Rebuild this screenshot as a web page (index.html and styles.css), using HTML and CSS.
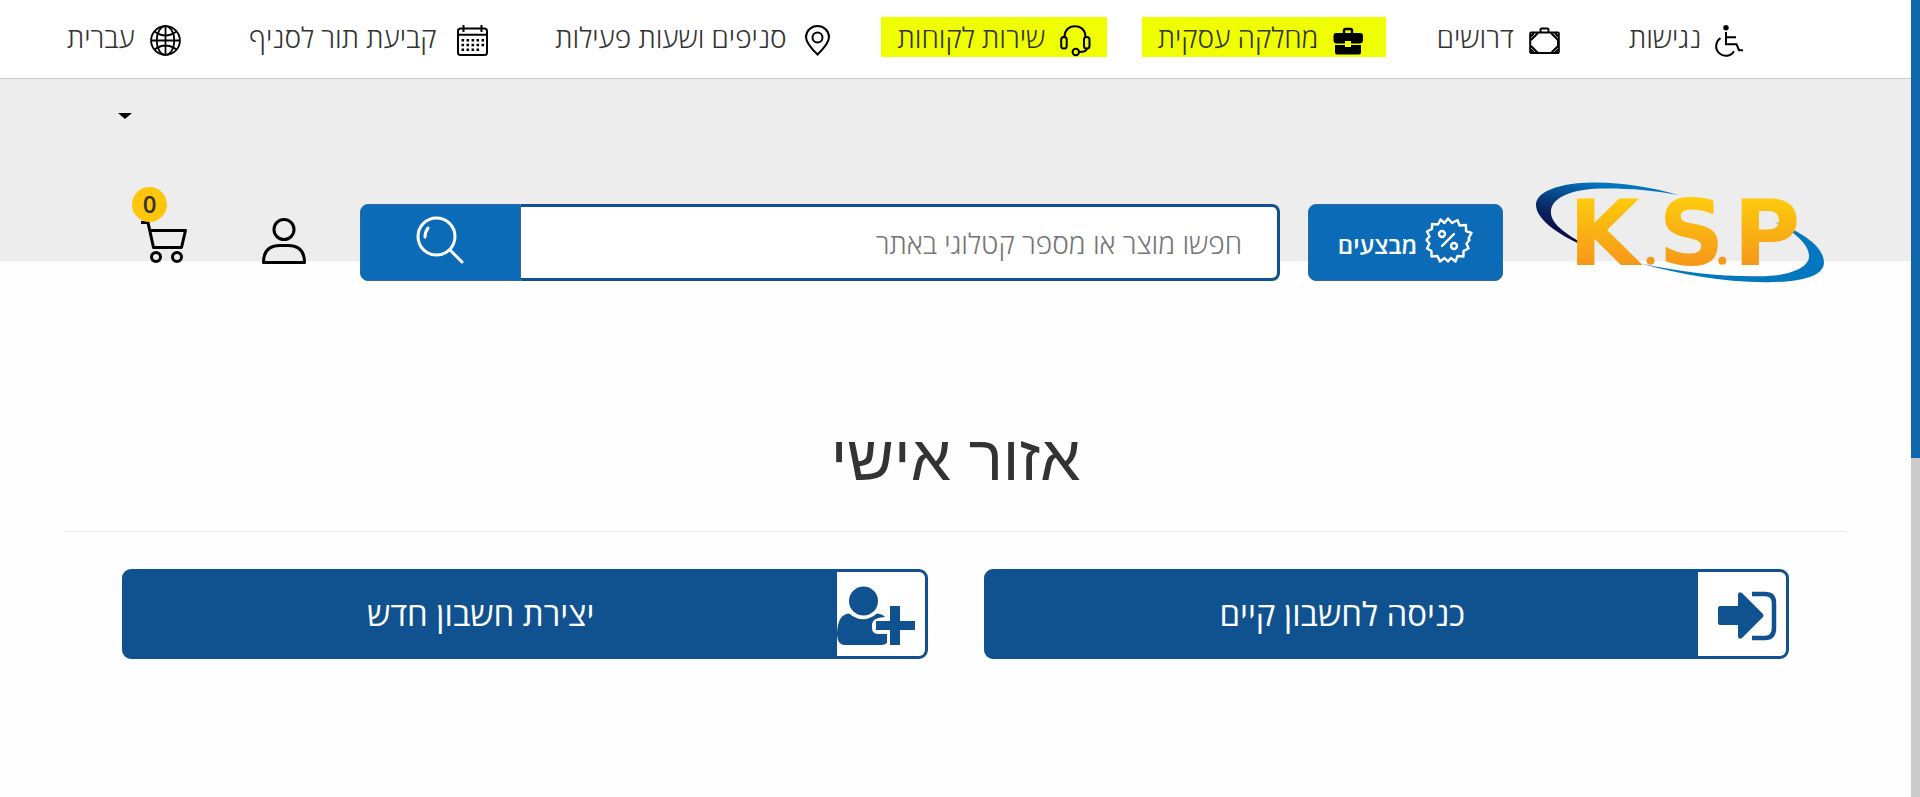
FILE: index.html
```html
<!DOCTYPE html>
<html lang="he" dir="rtl">
<head>
<meta charset="utf-8">
<title>אזור אישי - KSP</title>
<link rel="stylesheet" href="styles.css">
</head>
<body>
<div class="page">
  <nav class="topbar">
    <a class="toplink" href="#">
      <svg class="icon narrow" viewBox="2 0 27 31" fill="none" stroke="#000" stroke-width="2"><circle cx="12" cy="2.7" r="2.7" fill="#000" stroke="none"/><path d="M12 7v12.200h10.500l2.500 6h4M12 12.200h10M6.500 13.200a9.600 9.600 0 1 0 13.500 13"/></svg>
      <span>נגישות</span>
    </a>
    <a class="toplink" href="#">
      <svg class="icon" viewBox="0 0 31 31" fill="none" stroke="#000" stroke-width="2"><rect x="1.200" y="7.500" width="28.600" height="20.500" rx="1"/><path d="M11.500 7V4.500q0-1 1-1h6q1 0 1 1V7M2 15l7-7M22 8l7 7v6l-7 7M9 28l-7-7M2 11.500l3-3.500M29 11.500L26 8M2 24.500L5 28M29 24.500L26 28"/></svg>
      <span>דרושים</span>
    </a>
    <a class="toplink marked" href="#">
      <svg class="icon" viewBox="0 0 31 31"><path d="M11 9V5.500q0-1.500 1.500-1.500h5q1.500 0 1.500 1.500V9" fill="none" stroke="#000" stroke-width="2.400"/><path d="M3 8h24q3 0 3 3v4q0 3-3 3.500h-9V16h-6v2.500H3Q.5 18 .5 15v-4q0-3 2.500-3zM2 20h10v2h6v-2h10v7q0 2.500-2 2.500H4q-2 0-2-2.500z"/></svg>
      <span>מחלקה עסקית</span>
    </a>
    <a class="toplink marked" href="#">
      <svg class="icon" viewBox="0 0 31 31" fill="none" stroke="#000" stroke-width="2"><path d="M4.500 12C4.500 5 9 1.200 15 1.200S25.500 5 25.500 12M27 23q0 4-8 4"/><rect x="1.200" y="12" width="5.500" height="11.500" rx="2.500"/><rect x="24" y="12" width="5.500" height="11.500" rx="2.500"/><circle cx="15.800" cy="27" r="3.200"/></svg>
      <span>שירות לקוחות</span>
    </a>
    <a class="toplink" href="#">
      <svg class="icon" viewBox="0 0 31 31" fill="none" stroke="#000" stroke-width="2"><path d="M15.500 29.500Q4 18.500 4 12a11.500 11 0 0 1 23 0q0 6.500-11.500 17.500z"/><circle cx="15.500" cy="12.500" r="5"/></svg>
      <span>סניפים ושעות פעילות</span>
    </a>
    <a class="toplink calendar" href="#">
      <svg class="icon" viewBox="0 0 31 31" fill="none" stroke="#000" stroke-width="2"><rect x="1" y="3.500" width="29" height="26.500" rx="2.500"/><path d="M1 9.800h29M6.500 0v7M24.500 0v7"/><path d="M4.500 15.200h23M4.500 20h23M4.500 24.800h18" stroke-width="2.600" stroke-dasharray="2.600 2.400"/></svg>
      <span>קביעת תור לסניף</span>
    </a>
    <a class="toplink" href="#">
      <svg class="icon" viewBox="0 0 31 31" fill="none" stroke="#000" stroke-width="1.800"><circle cx="15.500" cy="15.500" r="14.400"/><ellipse cx="15.500" cy="15.500" rx="8.800" ry="14.400"/><path d="M15.500 1v29M1 15.500h29M4.500 6.500q11 8 22 0M4.500 24.500q11-8 22 0"/></svg>
      <span>עברית</span>
    </a>
  </nav>

  <header class="header">
    <button class="caret" type="button" aria-label="שפה"></button>
    <div class="header-row">
      <a class="logo" href="#" aria-label="K.S.P">
        <svg viewBox="0 0 290 102">
          <defs>
            <linearGradient id="gold" gradientUnits="userSpaceOnUse" x1="0" y1="17" x2="0" y2="84"><stop offset="0" stop-color="#fdcb0c"/><stop offset="1" stop-color="#f6981a"/></linearGradient>
            <linearGradient id="sea" x1="0" y1=".7" x2=".4" y2="0"><stop offset="0" stop-color="#0b0c48"/><stop offset=".35" stop-color="#0a2560"/><stop offset="1" stop-color="#0474bf"/></linearGradient>
          </defs>
          <path fill="url(#sea)" d="M143 14C115 6 85 1 56 1.500 25 2 0 10 0 24c0 15 26 33 54 43C32 54 15 44 15 31 15 15 40 7 72 7.500c24 0 46 2 71 6.500z"/>
          <path fill="#0577bf" d="M239 41c26 9 50 24 50 41 0 13-22 20-60 19.500-42 0-85-8-125-19 40 9 83 13.500 120 13 32 0 50-9 50-20 0-13-17-26-35-34.500z"/>
          <g class="logo-text" fill="url(#gold)"><text x="33" y="84">K</text><text x="123" y="84">S</text><text x="198" y="84">P</text></g>
          <circle cx="115" cy="80" r="4" fill="#f6991a"/><circle cx="187" cy="80" r="4" fill="#f6991a"/>
        </svg>
      </a>
      <a class="promo" href="#">
        <svg viewBox="0 0 46 46" fill="none" stroke="#fff" stroke-width="2.400" stroke-linejoin="round" stroke-linecap="round"><path d="M23 1.500l4 4.500 5.500-3 2 5.500 6.500-.500v6l5.500 2-3 5.500L44.500 23l-3 3.500 2 5-5 2.500v5.500l-6-.500-2 5.500-4.500-3.500-3 3.500-3.500-3.500-4.500 3.500-2.500-5.500-6 .500v-5.500L2 31.500l2.500-5L1.500 23l3-3.500-2.500-5L7 12V7l6 .500L15.500 2.500l4 3.500z"/><circle cx="17" cy="17" r="3"/><circle cx="29" cy="29" r="3"/><path d="M29 17L17 29"/></svg>
        <span>מבצעים</span>
      </a>
      <form class="search">
        <input class="search-input" type="text" aria-label="חיפוש" placeholder="חפשו מוצר או מספר קטלוגי באתר">
        <button class="search-button" type="button" aria-label="חפש">
          <svg viewBox="0 0 48 48" fill="none" stroke="#fff" stroke-width="3" stroke-linecap="round"><circle cx="20.500" cy="20.500" r="18.500"/><path d="M34 34l12 12M9 21q0-5 3-9"/></svg>
        </button>
      </form>
      <a class="user" href="#" aria-label="חשבון">
        <svg viewBox="0 0 44 46" fill="none" stroke="#000" stroke-width="3"><ellipse cx="22" cy="11.500" rx="10" ry="10"/><path d="M1.500 44.500Q1.500 27.500 18 27.500h8q16.500 0 16.500 17z" stroke-linejoin="round"/></svg>
      </a>
      <a class="cart" href="#" aria-label="עגלה">
        <svg viewBox="0 0 48 48" fill="none" stroke="#000" stroke-width="3"><path d="M1 7.500h7l5.500 25h28l4-17H10" stroke-linejoin="round"/><circle cx="16" cy="42" r="4.500"/><circle cx="37" cy="42" r="4.500"/></svg>
        <span class="badge">0</span>
      </a>
    </div>
  </header>

  <main class="main">
    <h1 class="title">אזור אישי</h1>
    <div class="choices">
      <a class="choice" href="#">
        <span class="choice-icon"><svg viewBox="0 0 88 84" fill="#0f528f"><path d="M22 34h18V23q0-4 4-2l21 21q1 2 0 3L44 66q-4 2-4-2V53H22q-2 0-2-2V36q0-2 2-2z"/><path d="M54 22h13q9 0 9 9v25q0 10-9 10H54" fill="none" stroke="#0f528f" stroke-width="4.500"/></svg></span>
        <span class="choice-text">כניסה לחשבון קיים</span>
      </a>
      <a class="choice" href="#">
        <span class="choice-icon"><svg viewBox="0 0 88 84" fill="#0f528f"><path d="M12 41.500Q26 53 40 41.500 46 42 48 45 35 46 35 52v4q0 6 7 6h8v9q-2 2-6 2H8Q0 73 0 61 1 42 12 41.500z"/><circle cx="26.500" cy="29" r="14.500"/><path d="M53 34h10v15h15v9H63v15H53V58H39v-9h14z"/></svg></span>
        <span class="choice-text">יצירת חשבון חדש</span>
      </a>
    </div>
  </main>
</div>
<div class="scrollbar"><div class="scroll-thumb"></div></div>
</body>
</html>
```

FILE: styles.css
```css
* { box-sizing: border-box; }
body {
  margin: 0;
  min-height: 100vh;
  display: flex;
  background: #fefefe;
  color: #333;
  font-family: "Open Sans", "Noto Sans", sans-serif;
  direction: ltr;
}
a { color: inherit; text-decoration: none; }
svg { display: block; overflow: visible; }
.page { flex: 1; min-width: 0; direction: rtl; }

.topbar {
  display: grid;
  grid-template-columns: 148fr 157fr 244fr 225fr 307fr 271fr 147fr;
  column-gap: 35px;
  align-items: start;
  min-height: 79px;
  padding: 17px 150px 0 51px;
  background: #fff;
  border-bottom: 1px solid #ccc;
}
.toplink {
  display: flex;
  justify-content: flex-end;
  align-items: center;
  gap: 15px;
  height: 40px;
  padding-left: 16px;
  font-size: 28px;
  font-weight: 300;
  line-height: 40px;
  white-space: nowrap;
}
.toplink.calendar { gap: 20px; }
.toplink.marked { background: #f0ff00; }
.icon { flex: none; width: 31px; height: 31px; margin-top: 7px; }
.icon.narrow { width: 27px; }

.header {
  padding: 34px 86px 0 118px;
  background: linear-gradient(#ededed 182px, transparent 0);
}
.caret {
  display: block;
  width: 14px;
  height: 6px;
  margin-right: auto;
  padding: 0;
  border: 0;
  background: #000;
  clip-path: polygon(0 0, 100% 0, 50% 100%);
}
.header-row { display: flex; align-items: center; margin-top: 62px; padding-left: 14px; }
.logo { flex: none; width: 289px; }
.logo-text { font: 700 92px "DejaVu Sans", sans-serif; direction: ltr; }
.promo {
  flex: none;
  display: flex;
  align-items: center;
  justify-content: center;
  gap: 8px;
  width: 195px;
  height: 77px;
  margin: 21px 33px 0 28px;
  padding-right: 2px;
  border: 1px solid #2b6a9f;
  border-radius: 8px;
  background: #0c6bb6;
  color: #fff;
  font-size: 24px;
  font-weight: 600;
}
.promo svg { width: 46px; height: 46px; margin-bottom: 4px; }
.promo span { padding-top: 5px; }
.search { flex: 1; display: flex; height: 77px; margin-top: 21px; }
.search-input {
  flex: 1;
  min-width: 0;
  padding: 2px 35px 0;
  border: 3px solid #0f528f;
  border-left: 0;
  border-radius: 0 8px 8px 0;
  background: #fff;
  color: #333;
  font: 300 28px "Open Sans", "Noto Sans", sans-serif;
}
.search-input::placeholder { color: #757575; opacity: 1; }
.search-button {
  display: flex;
  align-items: center;
  justify-content: center;
  width: 161px;
  padding: 0 2px 4px 0;
  border: 1px solid #2b6a9f;
  border-radius: 8px 0 0 8px;
  background: #0c6bb6;
}
.search-button svg { width: 48px; height: 48px; }
.user { flex: none; width: 44px; margin: 19px 54px 0 0; }
.cart { flex: none; position: relative; width: 56px; margin: 15px 74px 0 0; padding-left: 8px; }
.badge {
  position: absolute;
  left: 0;
  top: -28px;
  width: 35px;
  height: 35px;
  border-radius: 50%;
  background: #fdc60d;
  font-size: 24px;
  font-weight: 600;
  line-height: 33px;
  text-align: center;
}

.main { padding: 127px 65px 0; }
.title {
  margin: 0;
  padding-bottom: 25px;
  border-bottom: 1px solid #ebebeb;
  font-family: "Liberation Sans", sans-serif;
  font-size: 64px;
  font-weight: 400;
  line-height: 96px;
  text-align: center;
}
.choices {
  display: grid;
  grid-template-columns: 1fr 1fr;
  gap: 56px;
  padding: 37px 57px 0;
}
.choice {
  display: flex;
  height: 90px;
  border: 3px solid #0f528f;
  border-radius: 9px;
  background: #0f528f;
  color: #fff;
  font-size: 33px;
  line-height: 84px;
}
.choice-icon { flex: none; width: 88px; background: #fff; border-radius: 0 6px 6px 0; }
.choice-text { flex: 1; text-align: center; }

.scrollbar { width: 9px; background: #cbcbcb; }
.scroll-thumb { height: 458px; background: #0f66ab; }
```
